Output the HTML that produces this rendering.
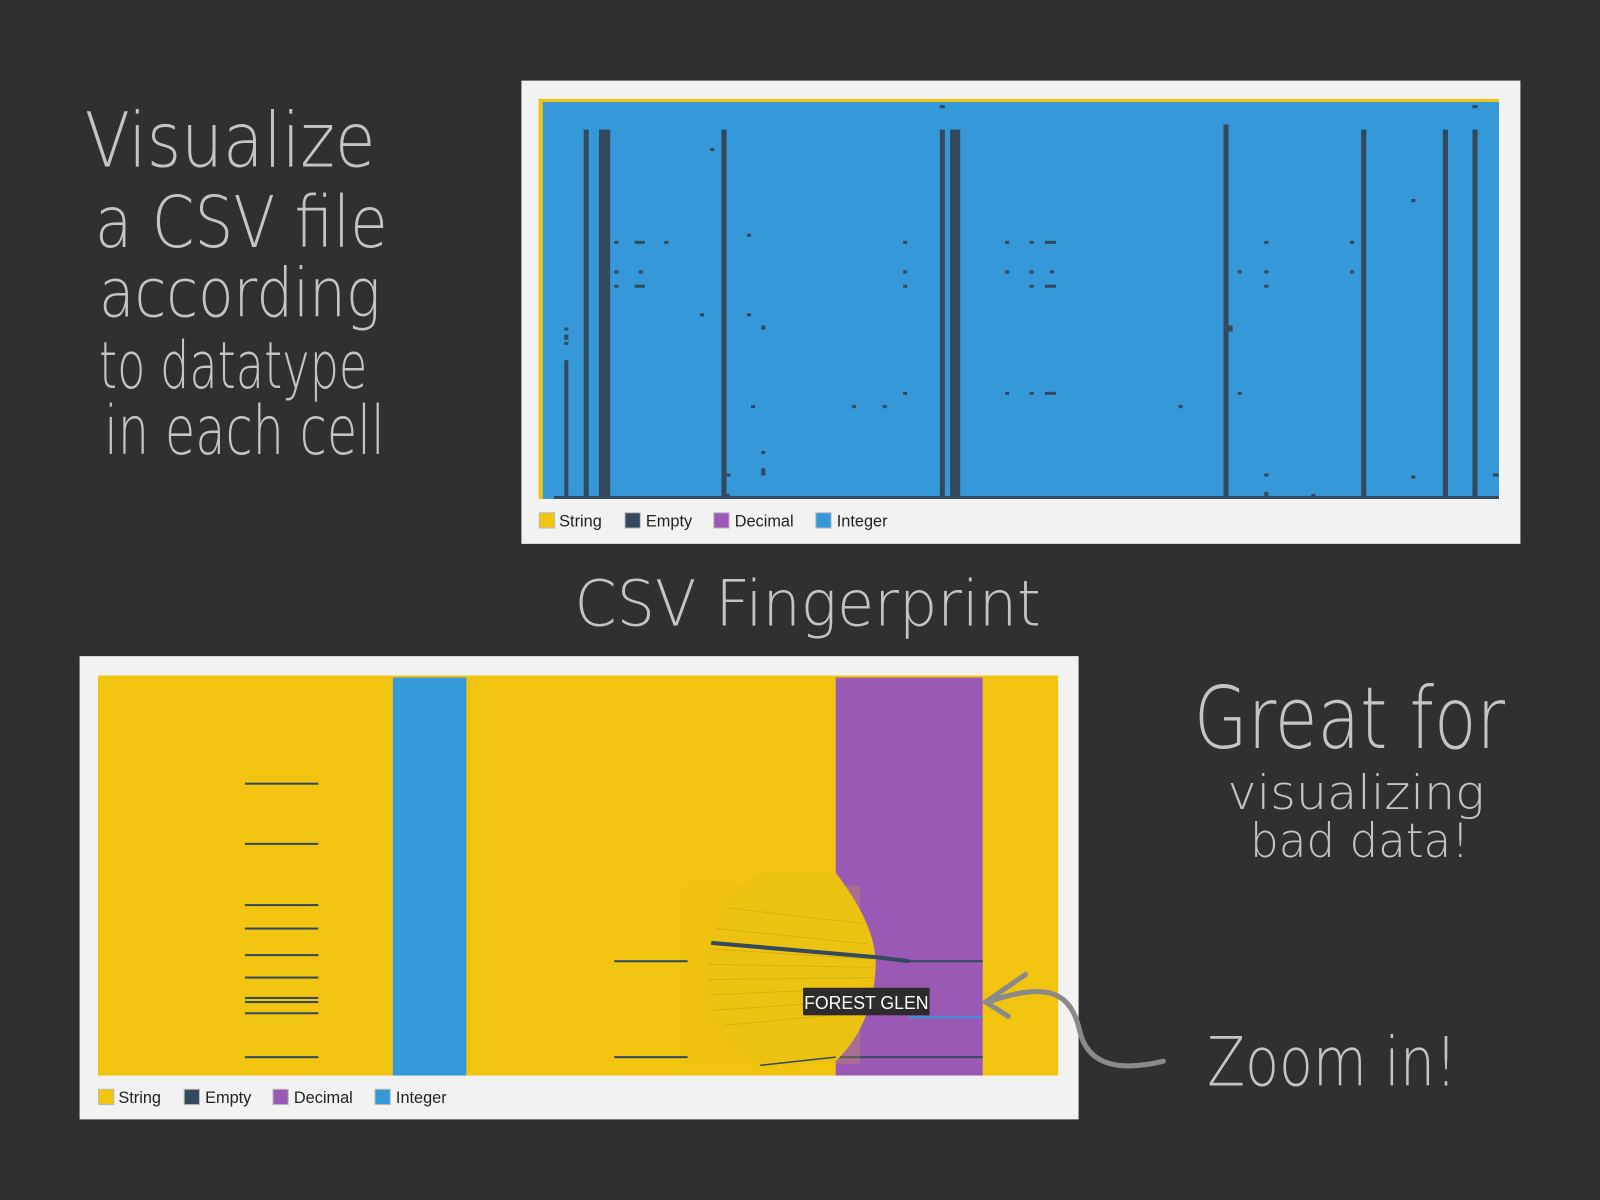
<!DOCTYPE html>
<html><head><meta charset="utf-8"><style>html,body{margin:0;padding:0;background:#303030;overflow:hidden}svg{display:block}</style></head>
<body>
<svg width="1600" height="1200" viewBox="0 0 1568 1176" xmlns="http://www.w3.org/2000/svg" font-family="Liberation Sans, sans-serif">
<rect width="1568" height="1176" fill="#303030"/>
<g fill="#c4c4c4" font-family="DejaVu Sans ExtraLight, DejaVu Sans, Liberation Sans, sans-serif" font-weight="200">
<text x="83" y="163" font-size="74" textLength="285" lengthAdjust="spacingAndGlyphs">Visualize</text>
<text x="93" y="242" font-size="70" textLength="287" lengthAdjust="spacingAndGlyphs">a CSV file</text>
<text x="97" y="310" font-size="66" textLength="276" lengthAdjust="spacingAndGlyphs">according</text>
<text x="97" y="380" font-size="64" textLength="263" lengthAdjust="spacingAndGlyphs">to datatype</text>
<text x="102" y="445" font-size="66" textLength="275" lengthAdjust="spacingAndGlyphs">in each cell</text>
<text x="563" y="613" font-size="62" textLength="457" lengthAdjust="spacingAndGlyphs">CSV  Fingerprint</text>
<text x="1170" y="733" font-size="84" textLength="305" lengthAdjust="spacingAndGlyphs">Great for</text>
<text x="1203" y="793" font-size="46" textLength="252" lengthAdjust="spacingAndGlyphs">visualizing</text>
<text x="1225" y="840" font-size="46" textLength="215" lengthAdjust="spacingAndGlyphs">bad data!</text>
<text x="1183" y="1064" font-size="66" textLength="245" lengthAdjust="spacingAndGlyphs">Zoom in!</text>
</g>
<!-- top panel -->
<rect x="511" y="79" width="979" height="454" fill="#f2f2f2"/>
<rect x="528" y="97" width="941" height="392" fill="#3598d9"/>
<rect x="528" y="97" width="941" height="3" fill="#f1c40f"/>
<rect x="528" y="97" width="4" height="392" fill="#f1c40f"/>
<g fill="#34495e">
<rect x="572" y="127" width="5" height="362"/><rect x="587" y="127" width="11" height="362"/>
<rect x="707" y="127" width="5" height="362"/><rect x="921" y="127" width="5" height="362"/>
<rect x="931" y="127" width="10" height="362"/><rect x="1199" y="122" width="5" height="367"/>
<rect x="1334" y="127" width="5" height="362"/><rect x="1414" y="127" width="5" height="362"/>
<rect x="1443" y="127" width="5" height="362"/><rect x="553" y="353" width="4" height="136"/>
<rect x="543" y="486" width="926" height="3"/>
<g>
<rect x="602" y="236" width="4" height="3"/><rect x="622" y="236" width="10" height="3"/><rect x="651" y="236" width="4" height="3"/><rect x="885" y="236" width="4" height="3"/><rect x="985" y="236" width="4" height="3"/><rect x="1009" y="236" width="4" height="3"/><rect x="1024" y="236" width="11" height="3"/><rect x="1239" y="236" width="4" height="3"/><rect x="1323" y="236" width="4" height="3"/>
<rect x="602" y="265" width="4" height="3"/><rect x="626" y="265" width="4" height="3"/><rect x="885" y="265" width="4" height="3"/><rect x="985" y="265" width="4" height="3"/><rect x="1009" y="265" width="4" height="3"/><rect x="1029" y="265" width="4" height="3"/><rect x="1213" y="265" width="4" height="3"/><rect x="1239" y="265" width="4" height="3"/><rect x="1323" y="265" width="4" height="3"/>
<rect x="602" y="279" width="4" height="3"/><rect x="622" y="279" width="10" height="3"/><rect x="885" y="279" width="4" height="3"/><rect x="1009" y="279" width="4" height="3"/><rect x="1024" y="279" width="11" height="3"/><rect x="1239" y="279" width="4" height="3"/>
<rect x="885" y="384" width="4" height="3"/><rect x="985" y="384" width="4" height="3"/><rect x="1009" y="384" width="4" height="3"/><rect x="1024" y="384" width="11" height="3"/><rect x="1213" y="384" width="4" height="3"/>
<rect x="736" y="397" width="4" height="3"/><rect x="835" y="397" width="4" height="3"/><rect x="865" y="397" width="4" height="3"/><rect x="1155" y="397" width="4" height="3"/>
<rect x="696" y="145" width="4" height="3"/><rect x="921" y="103" width="5" height="3"/><rect x="1443" y="103" width="5" height="3"/><rect x="1383" y="195" width="4" height="3"/><rect x="732" y="229" width="4" height="3"/><rect x="686" y="307" width="4" height="3"/><rect x="732" y="307" width="4" height="3"/><rect x="746" y="319" width="4" height="4"/>
<rect x="553" y="321" width="4" height="3"/><rect x="553" y="328" width="4" height="5"/><rect x="553" y="335" width="4" height="3"/><rect x="1202" y="319" width="6" height="6"/>
<rect x="746" y="442" width="4" height="3"/><rect x="746" y="459" width="4" height="7"/><rect x="710" y="464" width="6" height="3"/><rect x="1239" y="464" width="4" height="3"/><rect x="1383" y="466" width="4" height="3"/><rect x="1463" y="464" width="6" height="3"/><rect x="1239" y="482" width="4" height="4"/><rect x="1285" y="484" width="4" height="3"/><rect x="710" y="484" width="5" height="3"/>
</g></g>
<g font-size="16" fill="#222">
<rect x="528.5" y="502.5" width="15" height="15" fill="#f1c40f" stroke="#bbb"/><text x="548" y="516">String</text>
<rect x="612.5" y="502.5" width="15" height="15" fill="#34495e" stroke="#bbb"/><text x="633" y="516">Empty</text>
<rect x="699.5" y="502.5" width="15" height="15" fill="#9b59b6" stroke="#bbb"/><text x="720" y="516">Decimal</text>
<rect x="799.5" y="502.5" width="15" height="15" fill="#3598d9" stroke="#bbb"/><text x="820" y="516">Integer</text>
</g>
<!-- bottom panel -->
<rect x="78" y="643" width="979" height="454" fill="#f2f2f2"/>
<rect x="96" y="662" width="941" height="392" fill="#f1c40f"/>
<rect x="385" y="664" width="72" height="390" fill="#3598d9"/>
<rect x="819" y="664" width="144" height="390" fill="#9b59b6"/>
<g fill="#34495e">
<rect x="240" y="767" width="72" height="2"/><rect x="240" y="826" width="72" height="2"/><rect x="240" y="886" width="72" height="2"/><rect x="240" y="909" width="72" height="2"/><rect x="240" y="935" width="72" height="2"/><rect x="240" y="957" width="72" height="2"/><rect x="240" y="977" width="72" height="2"/><rect x="240" y="981" width="72" height="2"/><rect x="240" y="992" width="72" height="2"/><rect x="240" y="1035" width="72" height="2"/>
<rect x="602" y="941" width="72" height="2"/><rect x="602" y="1035" width="72" height="2"/>
<rect x="891" y="941" width="72" height="2"/><rect x="819" y="1035" width="144" height="2"/>
</g>
<rect x="891" y="996" width="72" height="2" fill="#3598d9"/>
<rect x="673" y="868" width="170" height="175" fill="#e8be10" opacity="0.2"/>
<path d="M745 855 L819 855 C845 890 860 920 858 950 C856 990 840 1020 819 1040 L745 1046 C700 1020 688 990 690 950 C692 910 705 880 745 855 Z" fill="#eac20f"/>
<g stroke="#c9a30c" stroke-width="0.8" opacity="0.7">
<line x1="697" y1="930" x2="855" y2="940"/><line x1="693" y1="945" x2="857" y2="948"/><line x1="693" y1="960" x2="857" y2="958"/><line x1="695" y1="975" x2="855" y2="968"/><line x1="700" y1="990" x2="850" y2="980"/><line x1="708" y1="1005" x2="845" y2="992"/><line x1="702" y1="910" x2="850" y2="925"/><line x1="715" y1="890" x2="845" y2="905"/>
</g>
<path d="M697 924 L858 938 L891 942" stroke="#34495e" stroke-width="4" fill="none"/>
<path d="M745 1044 L819 1036" stroke="#34495e" stroke-width="1.5" fill="none"/>
<rect x="787" y="968" width="124" height="27" fill="#2c2c2c"/>
<text x="788" y="989" font-size="18" fill="#fff" textLength="122" lengthAdjust="spacingAndGlyphs">FOREST GLEN</text>
<g font-size="16" fill="#222">
<rect x="96.5" y="1067.5" width="15" height="15" fill="#f1c40f" stroke="#bbb"/><text x="116" y="1081">String</text>
<rect x="180.5" y="1067.5" width="15" height="15" fill="#34495e" stroke="#bbb"/><text x="201" y="1081">Empty</text>
<rect x="267.5" y="1067.5" width="15" height="15" fill="#9b59b6" stroke="#bbb"/><text x="288" y="1081">Decimal</text>
<rect x="367.5" y="1067.5" width="15" height="15" fill="#3598d9" stroke="#bbb"/><text x="388" y="1081">Integer</text>
</g>
<!-- arrow -->
<g stroke="#8a8a8a" stroke-width="5" fill="none" stroke-linecap="round">
<path d="M1140 1040 C1090 1052 1065 1040 1058 1010 C1050 975 1030 960 968 982"/>
<path d="M1005 955 L966 982 L988 996"/>
</g>
</svg>
</body></html>
